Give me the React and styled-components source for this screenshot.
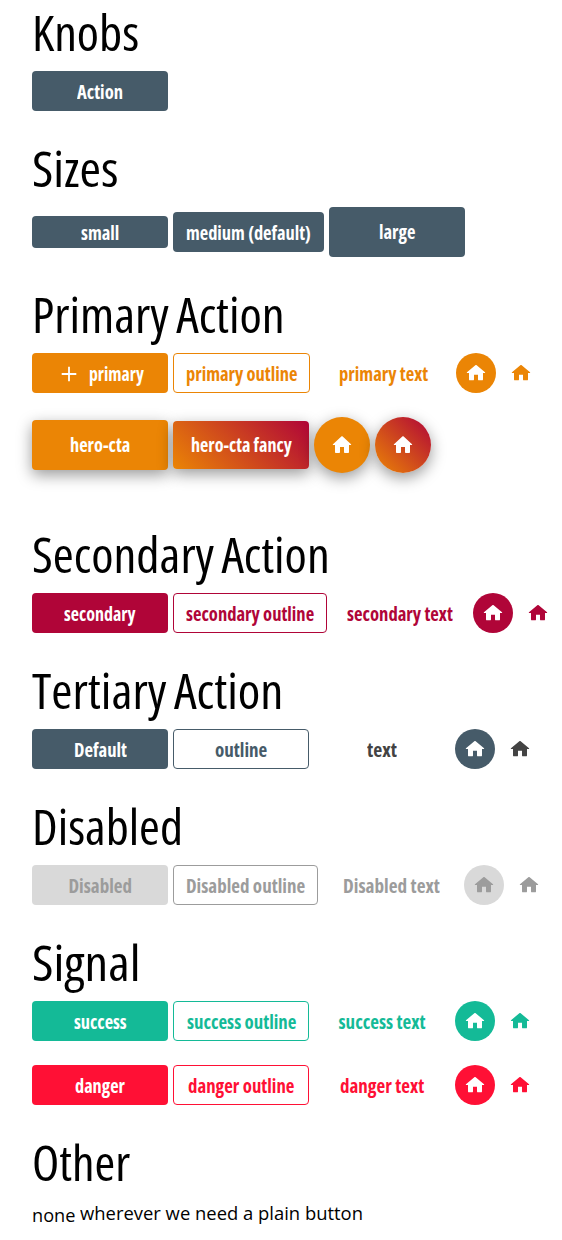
import React, { useLayoutEffect, useRef, useState } from "react";
import styled, { createGlobalStyle, css } from "styled-components";

const GlobalStyle = createGlobalStyle`
  * { box-sizing: border-box; }
  body { margin: 0; background: #fff; color: #000; font-family: "Open Sans", sans-serif; }
`;

const Page = styled.main`
  padding: 11px 0 0 32px;
  width: 562px;
  height: 1240px;
  overflow: hidden;
`;

const Section = styled.section`
  & + & { padding-top: 12px; }
`;

const Heading = styled.h1`
  margin: 0 0 18px;
  font-size: 49px;
  font-weight: 400;
  line-height: 42px;
  word-spacing: -2px;
`;

const Row = styled.div`
  display: flex;
  align-items: center;
  gap: 5px;
  margin-bottom: ${(p) => (p.$spacious ? 48 : 24)}px;
`;

const PlainRow = styled.div`
  display: flex;
  align-items: flex-start;
  gap: 5px;
  margin-top: -1px;
`;

const FitBox = styled.span`
  display: inline-block;
  white-space: nowrap;
  text-align: left;
  font-stretch: ${(p) => p.$stretch}%;
`;

const FitText = styled.span`
  display: inline-block;
  transform-origin: 0 50%;
`;

const colors = {
  primary: "#eb8505",
  secondary: "#b00538",
  tertiary: "#465b69",
  plain: "#434343",
  success: "#14ba97",
  danger: "#ff1035",
};

const gradient = "linear-gradient(45deg, #eb8505 0%, #b00538 100%)";
const heroShadow = "0 5px 15px rgba(0, 0, 0, 0.4)";

const variants = {
  solid: css`
    background: ${(p) => colors[p.$tone]};
    color: #fff;
  `,
  outline: css`
    background: #fff;
    border-color: currentColor;
    color: ${(p) => colors[p.$tone]};
  `,
  text: css`
    background: transparent;
    color: ${(p) => colors[p.$tone]};
  `,
  fancy: css`
    background: ${gradient};
    background-origin: border-box;
    color: #fff;
  `,
  disabledSolid: css`
    background: #d9d9d9;
    color: #9c9c9c;
  `,
  disabledOutline: css`
    background: #fff;
    border-color: currentColor;
    color: #9c9c9c;
  `,
  disabledText: css`
    background: transparent;
    color: #9c9c9c;
  `,
};

const Button = styled.button`
  display: flex;
  align-items: center;
  justify-content: center;
  flex: none;
  min-width: 136px;
  height: ${(p) => p.$height || 40}px;
  padding: ${(p) => (p.$height > 40 ? 0 : 2)}px 12px 0;
  border: 1px solid transparent;
  border-radius: 4px;
  font: 700 19px/26px "Open Sans", sans-serif;
  ${(p) => variants[p.$variant || "solid"]}
  box-shadow: ${(p) => (p.$hero ? heroShadow : "none")};
`;

const IconButton = styled.button`
  display: flex;
  align-items: center;
  justify-content: center;
  flex: none;
  width: ${(p) => (p.$hero ? 56 : 40)}px;
  height: ${(p) => (p.$hero ? 56 : 40)}px;
  padding: 0;
  border: 0;
  border-radius: 50%;
  ${(p) => variants[p.$variant || "solid"]}
  box-shadow: ${(p) => (p.$hero ? heroShadow : "none")};
`;

const PlusIcon = styled.svg`
  flex: none;
  width: 20px;
  height: 20px;
  margin: 0 10px 0 3px;
`;

const PlainButton = styled.button`
  padding: 0;
  border: 0;
  background: none;
  color: #000;
  font: 400 19px/26px "Open Sans", sans-serif;
  margin-top: ${(p) => p.$drop || 0}px;
`;

function Fit({ width, stretch = 75, children }) {
  const ref = useRef(null);
  const [scale, setScale] = useState(1);
  useLayoutEffect(() => {
    setScale(width / ref.current.offsetWidth);
  }, [width, children]);
  return (
    <FitBox $stretch={stretch} style={{ width }}>
      <FitText ref={ref} style={{ transform: `scaleX(${scale})` }}>
        {children}
      </FitText>
    </FitBox>
  );
}

function HomeIcon({ height }) {
  return (
    <svg width="24" height={height} viewBox="0 0 24 24" preserveAspectRatio="none" fill="currentColor">
      <path d="M10 19v-5h4v5c0 .55.45 1 1 1h3c.55 0 1-.45 1-1v-7h1.7c.46 0 .68-.57.33-.87L12.67 3.6c-.38-.34-.96-.34-1.34 0l-8.36 7.53c-.34.3-.13.87.33.87H5v7c0 .55.45 1 1 1h3c.55 0 1-.45 1-1z" />
    </svg>
  );
}

function Title({ width, children }) {
  return (
    <Heading>
      <Fit width={width}>{children}</Fit>
    </Heading>
  );
}

function ActionButton({ label, width, tone, variant, height, hero, icon }) {
  return (
    <Button $tone={tone} $variant={variant} $height={height} $hero={hero}>
      {icon}
      <Fit width={width}>{label}</Fit>
    </Button>
  );
}

function IconAction({ tone, variant, hero }) {
  return (
    <IconButton $tone={tone} $variant={variant} $hero={hero} aria-label="home">
      <HomeIcon height={hero ? 24 : 22} />
    </IconButton>
  );
}

const plus = (
  <PlusIcon viewBox="0 0 20 20" fill="none" stroke="currentColor" strokeWidth="1.8">
    <path d="M2.7 10h14.6M10 2.7v14.6" />
  </PlusIcon>
);

export default function App() {
  return (
    <Page>
      <GlobalStyle />
      <Section>
        <Title width={107}>Knobs</Title>
        <Row>
          <ActionButton tone="tertiary" label="Action" width={46} />
        </Row>
      </Section>
      <Section>
        <Title width={87}>Sizes</Title>
        <Row>
          <ActionButton tone="tertiary" label="small" width={38} height={32} />
          <ActionButton tone="tertiary" label="medium (default)" width={125} />
          <ActionButton tone="tertiary" label="large" width={36} height={50} />
        </Row>
      </Section>
      <Section>
        <Title width={253}>Primary Action</Title>
        <Row>
          <ActionButton tone="primary" label="primary" width={55} icon={plus} />
          <ActionButton tone="primary" variant="outline" label="primary outline" width={111} />
          <ActionButton tone="primary" variant="text" label="primary text" width={89} />
          <IconAction tone="primary" />
          <IconAction tone="primary" variant="text" />
        </Row>
        <Row $spacious>
          <ActionButton tone="primary" label="hero-cta" width={60} height={50} hero />
          <ActionButton variant="fancy" label="hero-cta fancy" width={101} height={48} hero />
          <IconAction tone="primary" hero />
          <IconAction variant="fancy" hero />
        </Row>
      </Section>
      <Section>
        <Title width={298}>Secondary Action</Title>
        <Row>
          <ActionButton tone="secondary" label="secondary" width={72} />
          <ActionButton tone="secondary" variant="outline" label="secondary outline" width={128} />
          <ActionButton tone="secondary" variant="text" label="secondary text" width={106} />
          <IconAction tone="secondary" />
          <IconAction tone="secondary" variant="text" />
        </Row>
      </Section>
      <Section>
        <Title width={251}>Tertiary Action</Title>
        <Row>
          <ActionButton tone="tertiary" label="Default" width={53} />
          <ActionButton tone="tertiary" variant="outline" label="outline" width={52} />
          <ActionButton tone="plain" variant="text" label="text" width={30} />
          <IconAction tone="tertiary" />
          <IconAction tone="plain" variant="text" />
        </Row>
      </Section>
      <Section>
        <Title width={151}>Disabled</Title>
        <Row>
          <ActionButton variant="disabledSolid" label="Disabled" width={63} />
          <ActionButton variant="disabledOutline" label="Disabled outline" width={119} />
          <ActionButton variant="disabledText" label="Disabled text" width={97} />
          <IconAction variant="disabledSolid" />
          <IconAction variant="disabledText" />
        </Row>
      </Section>
      <Section>
        <Title width={108}>Signal</Title>
        <Row>
          <ActionButton tone="success" label="success" width={53} />
          <ActionButton tone="success" variant="outline" label="success outline" width={109} />
          <ActionButton tone="success" variant="text" label="success text" width={87} />
          <IconAction tone="success" />
          <IconAction tone="success" variant="text" />
        </Row>
        <Row>
          <ActionButton tone="danger" label="danger" width={50} />
          <ActionButton tone="danger" variant="outline" label="danger outline" width={106} />
          <ActionButton tone="danger" variant="text" label="danger text" width={84} />
          <IconAction tone="danger" />
          <IconAction tone="danger" variant="text" />
        </Row>
      </Section>
      <Section>
        <Title width={98}>Other</Title>
        <PlainRow>
          <PlainButton $drop={2}>
            <Fit width={43} stretch={92}>none</Fit>
          </PlainButton>
          <PlainButton>
            <Fit width={283} stretch={92}>wherever we need a plain button</Fit>
          </PlainButton>
        </PlainRow>
      </Section>
    </Page>
  );
}
